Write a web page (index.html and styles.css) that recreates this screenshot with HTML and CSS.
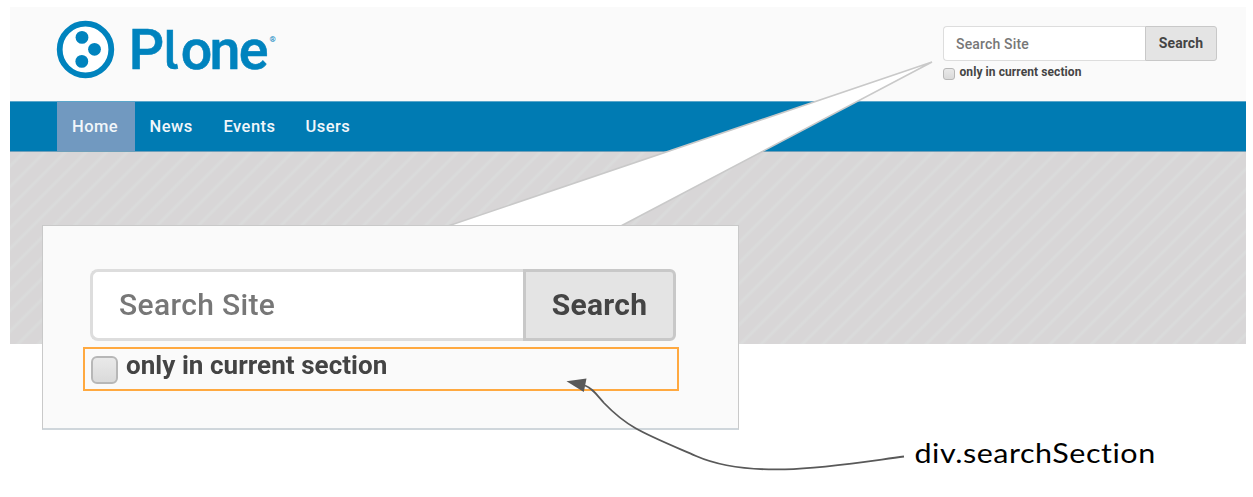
FILE: index.html
```html
<!DOCTYPE html>
<html lang="en">
<head>
<meta charset="utf-8">
<title>Plone</title>
<link rel="stylesheet" href="styles.css">
</head>
<body>
<div class="site">
  <header class="header">
    <svg class="logo" width="230" height="70" viewBox="50 15 230 70" role="img" aria-label="Plone">
      <circle cx="85.5" cy="49.5" r="25.8" fill="#fff" stroke="#0083be" stroke-width="5.8"/>
      <g fill="#0083be">
        <circle cx="82" cy="37.4" r="6.4"/>
        <circle cx="94.5" cy="49.3" r="6.4"/>
        <circle cx="81.8" cy="61.4" r="6.4"/>
      </g>
      <text class="wordmark" y="69.3" x="128.8 163.2 180.8 209.5 238.7">P<tspan class="tailed">l</tspan>one</text>
      <text class="registered" x="269.5" y="41.5">®</text>
    </svg>
    <form class="search">
      <div class="search-row">
        <span class="field">Search Site</span>
        <span class="button">Search</span>
      </div>
      <label class="section"><span class="check"></span>only in current section</label>
    </form>
  </header>
  <nav class="nav">
    <a class="tab active">Home</a>
    <a class="tab news">News</a>
    <a class="tab events">Events</a>
    <a class="tab users">Users</a>
  </nav>
  <main class="hero"></main>
</div>

<svg class="overlay" width="1253" height="497" viewBox="0 0 1253 497">
  <path d="M445 227 932 62 619 227" fill="#fff" stroke="#c9c9c9" stroke-width="1.6" stroke-linejoin="bevel"/>
</svg>

<section class="zoomed">
  <div class="search-row">
    <span class="field"><span class="soft">Search Site</span></span>
    <span class="button"><span class="soft">Search</span></span>
  </div>
  <div class="section"><span class="check"></span><span class="soft">only in current section</span></div>
</section>

<svg class="overlay" width="1253" height="497" viewBox="0 0 1253 497">
  <path d="M904 456.5C839 465 753 481 696 456C643 433 628 428 604 403C596 394 592 388 585 385.5" fill="none" stroke="#595959" stroke-width="1.8"/>
  <path d="M566.5 381.2 586.5 378.5 583.8 392Z" fill="#595959"/>
  <text class="note" transform="translate(914.5 463) scale(1.13 1)" textLength="213">div.searchSection</text>
</svg>
</body>
</html>
```
FILE: styles.css
```css
body {
  margin: 0;
  height: 497px;
  overflow: hidden;
  background: #fff;
  color: #444;
  font-family: Roboto, "Liberation Sans", sans-serif;
}

.site {
  width: 1235.5px;
  padding: 7px 0 0 10px;
}

.header {
  box-sizing: border-box;
  display: flex;
  justify-content: space-between;
  height: 94px;
  padding: 8px 29px 0 40px;
  background: #fafafa;
}

.logo { flex: none; }

.wordmark {
  fill: #0083be;
  stroke: #0083be;
  stroke-width: 0.6px;
  font-size: 55.5px;
  font-weight: 500;
}

.tailed {
  font-family: Inter, sans-serif;
  font-size: 53px;
  font-feature-settings: "cv05" 1;
}

.registered {
  fill: #0083be;
  font-size: 8px;
  font-weight: 700;
}

.search {
  width: 274px;
  padding-top: 11px;
}

.search-row {
  display: flex;
  height: 35px;
}

.field,
.button {
  box-sizing: border-box;
  display: flex;
  align-items: center;
  white-space: nowrap;
}

.field {
  flex: 1;
  padding-left: 12.5px;
  border: 1.5px solid #ddd;
  border-right: 0;
  border-radius: 4px 0 0 4px;
  background: #fff;
  color: #777;
  font-size: 14px;
  font-weight: 500;
  letter-spacing: 0.17px;
}

.button {
  justify-content: center;
  width: 72px;
  border: 1px solid #c8c8c8;
  border-radius: 0 3px 3px 0;
  background: #e4e4e4;
  color: #444;
  font-size: 14px;
  font-weight: 700;
  letter-spacing: 0.1px;
}

.search .button { padding: 0 0 1px 1px; }

.section {
  display: flex;
  align-items: flex-start;
  white-space: nowrap;
  font-size: 12px;
  font-weight: 700;
  line-height: 16px;
}

.search .section {
  gap: 5px;
  padding-top: 2.5px;
  letter-spacing: 0.08px;
}

.check {
  box-sizing: border-box;
  flex: none;
  width: 12px;
  height: 12px;
  margin-top: 4px;
  border: 1px solid #b7b7b7;
  border-radius: 3px;
  background: linear-gradient(#e9e9e9, #dadada);
}

.nav {
  box-sizing: border-box;
  display: flex;
  height: 51px;
  padding-left: 47px;
  border-top: 1px solid #5aa6cb;
  border-bottom: 1px solid #6f9fb9;
  background: #007bb3;
}

.tab {
  padding: 0 15px;
  color: #f1f6fa;
  font-size: 16.5px;
  font-weight: 500;
  line-height: 50px;
  letter-spacing: 0.45px;
}

.active {
  width: 47.5px;
  background: #7199c0;
}

.news { width: 44px; }
.events { width: 52px; }

.hero {
  height: 191.5px;
  background: repeating-linear-gradient(135deg, #d8d6d7 0 7.5px, #dadbdb 9.5px 10.5px, #d8d6d7 12.5px 14.6px);
}

.overlay {
  position: absolute;
  top: 0;
  left: 0;
}

.note {
  fill: #000;
  font-family: Lato, sans-serif;
  font-size: 27px;
  font-variant-ligatures: none;
}

.zoomed {
  position: absolute;
  top: 225px;
  left: 42px;
  box-sizing: border-box;
  width: 697px;
  height: 205px;
  padding: 43px 59px 0 40px;
  border: 1px solid #c9c9c9;
  border-bottom: 2px solid #cfd6db;
  background: #fafafa;
}

.soft { filter: blur(0.6px); }

.zoomed .search-row {
  width: 586px;
  height: 72px;
  margin-left: 7px;
}

.zoomed .field {
  padding-left: 26px;
  border-width: 3px;
  border-radius: 8px 0 0 8px;
  font-size: 30px;
  letter-spacing: 0.35px;
}

.zoomed .field,
.zoomed .button {
  padding-bottom: 2px;
}

.zoomed .button {
  width: 153px;
  border-width: 3px;
  border-radius: 0 6px 6px 0;
  font-size: 30px;
  letter-spacing: 0.3px;
}

.zoomed .section {
  box-sizing: border-box;
  gap: 8px;
  width: 596px;
  height: 44px;
  margin-top: 6px;
  padding-left: 6px;
  border: 2px solid #ffa940;
  font-size: 26px;
  line-height: 33px;
  letter-spacing: 0.05px;
}

.zoomed .check {
  width: 27px;
  height: 28px;
  margin-top: 7px;
  border-width: 2.5px;
  border-radius: 6px;
  filter: blur(0.6px);
}
```
